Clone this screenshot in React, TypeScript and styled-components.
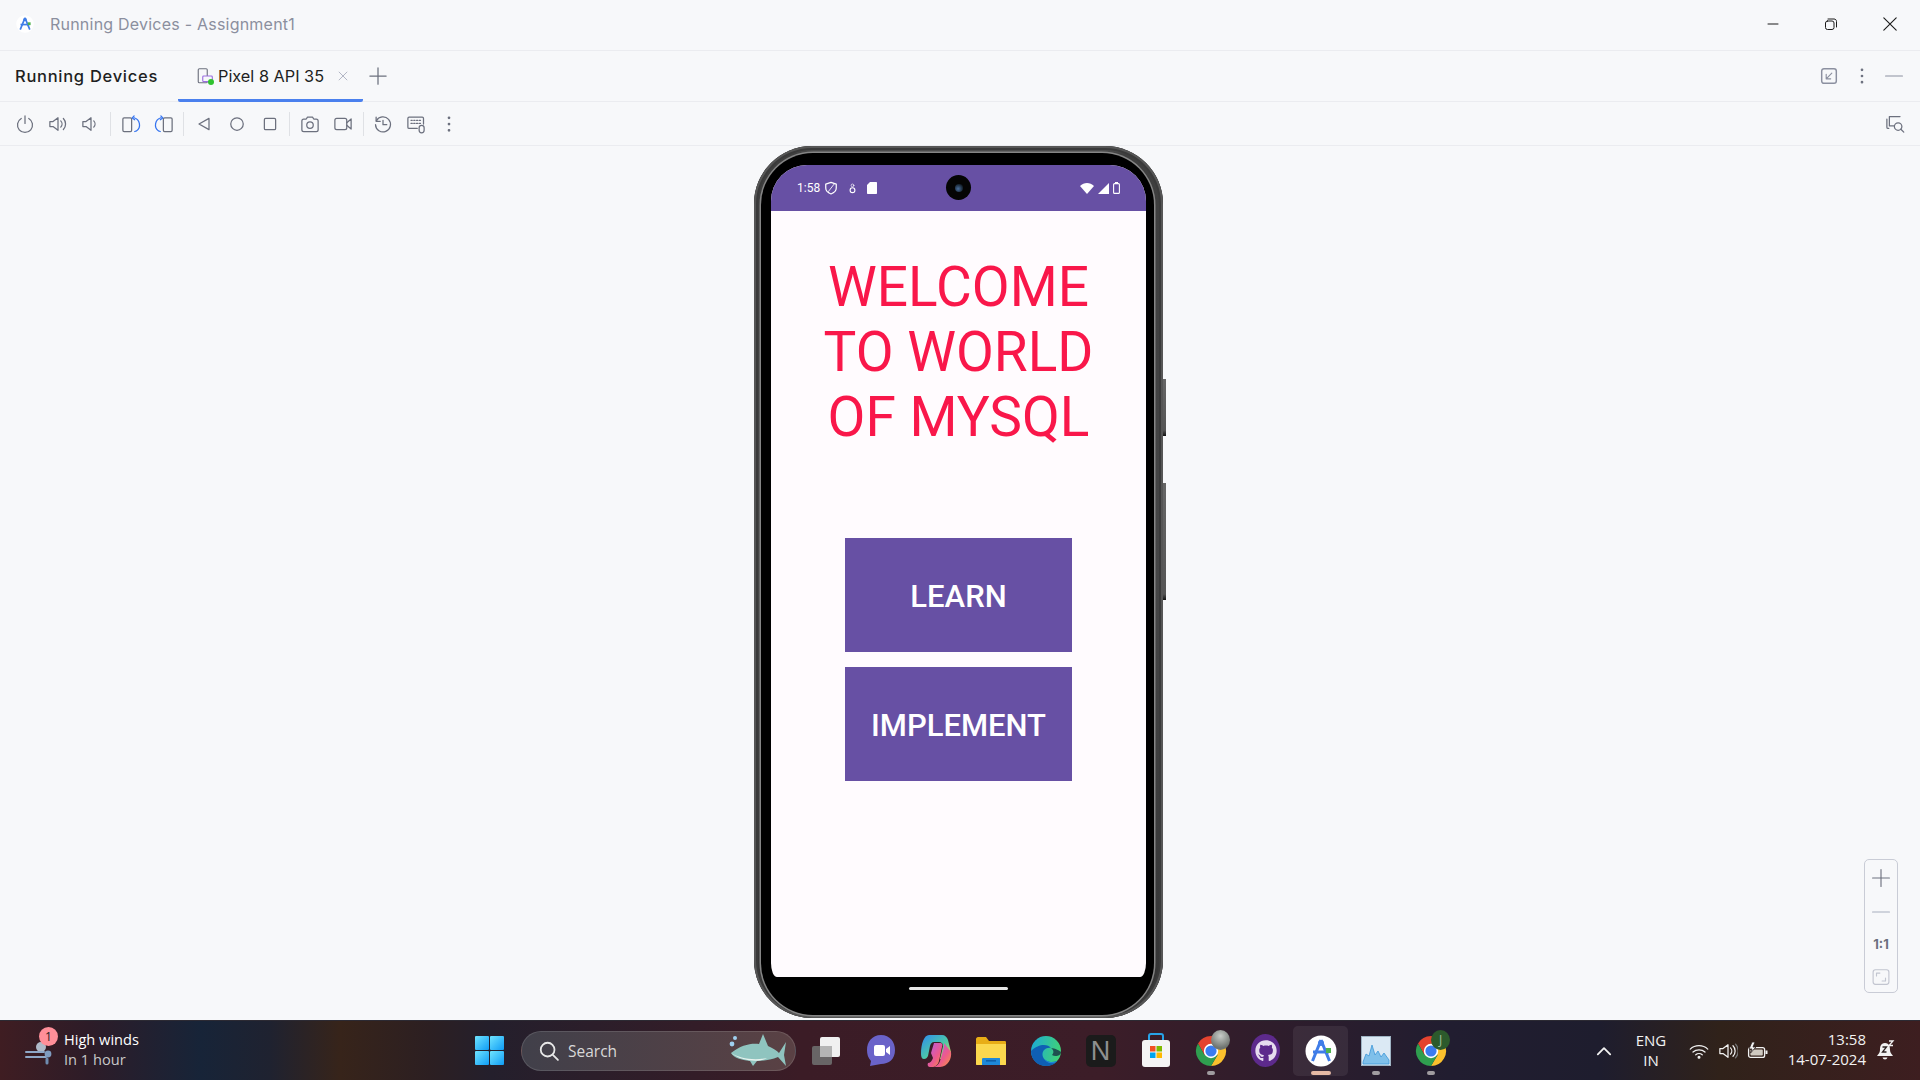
import styled, { createGlobalStyle } from "styled-components";
import { FaGithub } from "react-icons/fa";

const GlobalStyle = createGlobalStyle`
  html, body {
    margin: 0;
    padding: 0;
    width: 1920px;
    height: 1080px;
    overflow: hidden;
    background: #f7f8fa;
    font-family: "Inter", "Liberation Sans", sans-serif;
  }
  * { box-sizing: border-box; }
`;

// icons
const Ico = ({ children, size = 20, vb = 16, color = "#6c707e" }: { children: React.ReactNode; size?: number; vb?: number; color?: string }) => (
  <svg width={size} height={size} viewBox={`0 0 ${vb} ${vb}`} fill="none" stroke={color} strokeWidth="1" strokeLinecap="round" strokeLinejoin="round">
    {children}
  </svg>
);

const StudioLogo = ({ size }: { size: number }) => (
  <svg width={size} height={size} viewBox="0 0 32 32">
    <circle cx="16" cy="16" r="15.5" fill="#fff" />
    <path d="M16 5 L7.5 26 M16 5 L24.5 26" stroke="#3f7de8" strokeWidth="3" fill="none" />
    <path d="M8 17 H24" stroke="#3f7de8" strokeWidth="3" />
    <circle cx="16" cy="8" r="3" fill="#3f7de8" />
    <rect x="21" y="13" width="5" height="5" fill="#4fb34f" />
  </svg>
);

const ChromeIcon = () => (
  <svg width="32" height="32" viewBox="0 0 32 32">
    <path d="M3 8.5 A15 15 0 0 1 29 8.5 L16 8.5 L9.5 20 Z" fill="#e5432f" />
    <path d="M29 8.5 A15 15 0 0 1 16 31 L22.5 20 L16 8.5 Z" fill="#fbc02d" />
    <path d="M16 31 A15 15 0 0 1 3 8.5 L9.5 20 L22.5 20 Z" fill="#2f9e4f" />
    <circle cx="16" cy="16" r="7.2" fill="#fff" />
    <circle cx="16" cy="16" r="5.6" fill="#3b7cf0" />
  </svg>
);

const TaskView = () => (
  <svg width="32" height="32" viewBox="0 0 32 32">
    <rect x="10" y="2" width="20" height="20" rx="2" fill="#f0f0f0" />
    <rect x="2" y="11" width="20" height="19" rx="2" fill="#6e6e6e" fillOpacity="0.9" />
    <rect x="10" y="11" width="12" height="11" fill="#b4b4b4" />
  </svg>
);

const MeetIcon = () => (
  <svg width="32" height="34" viewBox="0 0 32 34">
    <path d="M16 1 C25 1 30 8 30 16 C30 25 24 30 16 30 L5 32 L6 27 C3 24 2 20 2 16 C2 8 7 1 16 1 Z" fill="#6a63c9" />
    <rect x="9" y="11" width="11" height="11" rx="2" fill="#fff" />
    <path d="M21 15 L25 12 V21 L21 18 Z" fill="#fff" />
  </svg>
);

const CopilotIcon = () => (
  <svg width="32" height="34" viewBox="0 0 32 34">
    <defs>
      <linearGradient id="cpA" x1="0" y1="0" x2="1" y2="1">
        <stop offset="0" stopColor="#2e8cf0" />
        <stop offset="0.55" stopColor="#4cc8a8" />
        <stop offset="1" stopColor="#f5d03c" />
      </linearGradient>
      <linearGradient id="cpB" x1="0" y1="0" x2="1" y2="1">
        <stop offset="0" stopColor="#b25ae8" />
        <stop offset="0.6" stopColor="#ee5a8c" />
        <stop offset="1" stopColor="#f79a3c" />
      </linearGradient>
    </defs>
    <path d="M9 1 H22 C25 1 27 3 28 6 L31 18 C31 24 27 25 24 25 H20 L23 12 C23 9 21 8 19 8 H14 C12 8 11 9 10 12 L8 22 C7 24 6 25 4 25 C2 25 1 23 1 20 C1 10 4 1 9 1 Z" fill="url(#cpA)" />
    <path d="M14 9 H20 C22 9 23 10 22 13 L19 27 C18 31 15 33 12 33 H10 C8 33 7 31 8 29 C10 29 12 27 13 24 L11 19 Z" fill="url(#cpB)" />
    <path d="M24 9 L31 18 C32 24 28 33 20 33 H14 C17 32 19 30 20 27 L24 13 Z" fill="url(#cpB)" />
  </svg>
);

const FolderIcon = () => (
  <svg width="32" height="30" viewBox="0 0 32 30">
    <path d="M1 3 C1 2 2 1 3 1 H11 L14 5 H30 C31 5 31 6 31 7 V28 C31 29 30 29 30 29 H2 C1 29 1 28 1 28 Z" fill="#e8ad16" />
    <path d="M1 8 H31 V28 C31 29 30 29 30 29 H2 C1 29 1 28 1 28 Z" fill="#fbd84e" />
    <path d="M7 29 V23 C7 22 8 22 8 22 H24 C25 22 25 22 25 23 V29 Z" fill="#1e88d8" />
    <rect x="11" y="24" width="10" height="1.6" fill="#0f5fa8" />
  </svg>
);

const EdgeIcon = () => (
  <svg width="32" height="32" viewBox="0 0 32 32">
    <defs>
      <linearGradient id="egA" x1="0" y1="0" x2="1" y2="0.2">
        <stop offset="0" stopColor="#1baad8" />
        <stop offset="1" stopColor="#3fd07a" />
      </linearGradient>
    </defs>
    <circle cx="16" cy="16" r="15" fill="url(#egA)" />
    <path d="M1 16 C1 25 8 31 16 31 C21 31 25 29 27 26 C22 28 15 27 13 22 C11 17 15 12 21 13 C18 9 9 8 1 16 Z" fill="#0f5fb4" />
    <path d="M13 22 C15 27 22 28 27 26 C24 30 16 29 13 22 Z" fill="#1d88d8" />
    <path d="M21 13 C25 13 30 16 31 17 C31 21 25 22 22 20 C24 18 24 15 21 13 Z" fill="#16283f" fillOpacity="0.75" />
  </svg>
);

const StoreIcon = () => (
  <svg width="32" height="36" viewBox="0 0 32 36">
    <path d="M9 8 V3 C9 2 10 1 11 1 H21 C22 1 23 2 23 3 V8" fill="none" stroke="#27a3e8" strokeWidth="2" />
    <rect x="2" y="7" width="28" height="27" rx="3" fill="#f4f4f4" />
    <rect x="10" y="13" width="5.5" height="5.5" fill="#f25022" />
    <rect x="16.5" y="13" width="5.5" height="5.5" fill="#7fba00" />
    <rect x="10" y="19.5" width="5.5" height="5.5" fill="#00a4ef" />
    <rect x="16.5" y="19.5" width="5.5" height="5.5" fill="#ffb900" />
  </svg>
);

const MonitorIcon = () => (
  <svg width="30" height="30" viewBox="0 0 30 30">
    <rect x="0.5" y="0.5" width="29" height="29" fill="#dbe9f4" stroke="#9fb4c4" />
    <path d="M2 26 L5 18 L8 20 L11 9 L14 19 L17 15 L20 21 L23 17 L28 24 V28 H2 Z" fill="#7fc0ea" stroke="#3d97d8" strokeWidth="0.8" />
  </svg>
);

const WindowsLogo = () => (
  <svg width="29" height="29" viewBox="0 0 29 29">
    <defs>
      <linearGradient id="winA" x1="0" y1="0" x2="1" y2="1">
        <stop offset="0" stopColor="#6fe4ff" />
        <stop offset="1" stopColor="#0f9cf5" />
      </linearGradient>
    </defs>
    <rect x="0" y="0" width="14" height="14" rx="1" fill="url(#winA)" />
    <rect x="15" y="0" width="14" height="14" rx="1" fill="url(#winA)" />
    <rect x="0" y="15" width="14" height="14" rx="1" fill="url(#winA)" />
    <rect x="15" y="15" width="14" height="14" rx="1" fill="url(#winA)" />
  </svg>
);

const Shark = () => (
  <svg width="58" height="36" viewBox="0 0 58 36">
    <path d="M2 20 C12 12 22 10 30 11 L34 1 L39 13 C44 15 48 18 50 20 L57 9 L55 22 L57 33 L49 24 C42 27 34 28 28 28 L24 33 L21 28 C12 27 5 25 2 20 Z" fill="#8fc4bf" />
    <path d="M2 20 C10 25 24 28 38 25 C30 30 12 28 2 20 Z" fill="#e8f2ee" />
    <circle cx="6" cy="5" r="2" fill="#9fd0f0" />
    <circle cx="3" cy="11" r="2.4" fill="#9fd0f0" />
  </svg>
);

const WeatherIcon = () => (
  <svg width="30" height="30" viewBox="0 0 30 30">
    <circle cx="17" cy="11" r="5" fill="#aeb9c8" />
    <path d="M2 16 H20 M2 21 H22" stroke="#8fa8c8" strokeWidth="2" fill="none" strokeLinecap="round" />
    <circle cx="24" cy="18" r="3.4" fill="#7f9cc0" />
    <path d="M23 23 V27" stroke="#6f8cb0" strokeWidth="3" strokeLinecap="round" />
  </svg>
);

// toolbar data
const leftToolbar: React.ReactNode[][] = [
  [
    <Ico key="power"><path d="M5 3.6 a6 6 0 1 0 6 0" /><path d="M8 1.5 V7.5" /></Ico>,
    <Ico key="volup"><path d="M1.5 6 H4 L8 3 V13 L4 10 H1.5 Z" /><path d="M10.2 5.5 a3.6 3.6 0 0 1 0 5" /><path d="M12.3 3.6 a6.4 6.4 0 0 1 0 8.8" /></Ico>,
    <Ico key="voldown"><path d="M1.5 6 H4 L8 3 V13 L4 10 H1.5 Z" /><path d="M10.2 5.5 a3.6 3.6 0 0 1 0 5" /></Ico>,
  ],
  [
    <Ico key="rotr"><rect x="1.5" y="3" width="7" height="11" rx="1" /><path d="M10.5 3 a6 6 0 0 1 2 10.5 L11 14" stroke="#3574f0" /><path d="M10.5 1.5 L9 3.2 L11 4.6" stroke="#3574f0" /></Ico>,
    <Ico key="rotl"><rect x="7.5" y="3" width="7" height="11" rx="1" /><path d="M5.5 3 a6 6 0 0 0 -2 10.5 L5 14" stroke="#3574f0" /><path d="M5.5 1.5 L7 3.2 L5 4.6" stroke="#3574f0" /></Ico>,
  ],
  [
    <Ico key="back"><path d="M12 3.5 L4 8 L12 12.5 Z" /></Ico>,
    <Ico key="home"><circle cx="8" cy="8" r="5" /></Ico>,
    <Ico key="overview"><rect x="3.5" y="3.5" width="9" height="9" rx="1" /></Ico>,
  ],
  [
    <Ico key="camera"><path d="M1.5 5.5 C1.5 4.5 2 4 3 4 H5 L6 2.5 H10 L11 4 H13 C14 4 14.5 4.5 14.5 5.5 V12.5 C14.5 13.5 14 14 13 14 H3 C2 14 1.5 13.5 1.5 12.5 Z" /><circle cx="8" cy="8.8" r="2.6" /></Ico>,
    <Ico key="video"><rect x="1.5" y="3.5" width="9.5" height="9" rx="1.5" /><path d="M11 7 L14.5 4 V12 L11 9" /></Ico>,
  ],
  [
    <Ico key="history"><path d="M2.7 5.5 A6 6 0 1 1 2 8.5" /><path d="M2.5 2.5 V5.8 H5.8" /><path d="M8 5 V8.5 H11" /></Ico>,
    <Ico key="keys"><path d="M9 11.5 H2.5 C2 11.5 1.5 11 1.5 10.5 V3.5 C1.5 3 2 2.5 2.5 2.5 H13 C13.5 2.5 14 3 14 3.5 V8" /><path d="M4 5 H12 M4 7.5 H12" strokeDasharray="1 1.2" /><rect x="10.5" y="9" width="4" height="6" rx="2" /></Ico>,
    <Ico key="more"><circle cx="8" cy="3" r="0.6" fill="#6c707e" /><circle cx="8" cy="8" r="0.6" fill="#6c707e" /><circle cx="8" cy="13" r="0.6" fill="#6c707e" /></Ico>,
  ],
];

const apps = [
  { id: "taskview", icon: <TaskView /> },
  { id: "meet", icon: <MeetIcon /> },
  { id: "copilot", icon: <CopilotIcon /> },
  { id: "folder", icon: <FolderIcon /> },
  { id: "edge", icon: <EdgeIcon /> },
  { id: "notion", icon: <NotionTile>N</NotionTile> },
  { id: "store", icon: <StoreIcon /> },
  { id: "chrome", icon: <ChromeIcon />, running: true, badge: <PhotoBadge /> },
  { id: "github", icon: <GithubDisc><FaGithub size={22} color="#e6dcef" /></GithubDisc> },
  { id: "studio", icon: <StudioLogo size={32} />, active: true },
  { id: "monitor", icon: <MonitorIcon />, running: true },
  { id: "chrome2", icon: <ChromeIcon />, running: true, badge: <LetterBadge>J</LetterBadge> },
];

export default function App() {
  return (
    <>
      <GlobalStyle />
      <Page>
        <TitleBar>
          <TitleLeft>
            <StudioLogo size={18} />
            <TitleText>Running Devices - Assignment1</TitleText>
          </TitleLeft>
          <WindowControls>
            <Ico color="#1b1b1b" size={16}><path d="M3 8 H13" /></Ico>
            <Ico color="#1b1b1b" size={16}><rect x="2.5" y="5" width="8.5" height="8.5" rx="2" /><path d="M5 3 H11 C12.5 3 13.5 4 13.5 5.5 V11" /></Ico>
            <Ico color="#1b1b1b" size={18}><path d="M2.5 2.5 L13.5 13.5 M13.5 2.5 L2.5 13.5" /></Ico>
          </WindowControls>
        </TitleBar>

        <TabRow>
          <PanelName>Running Devices</PanelName>
          <Tab>
            <TabIcon>
              <Ico color="#6c707e" size={18}><rect x="2" y="1.5" width="8" height="12.5" rx="1" /><rect x="6" y="8" width="8.5" height="5" rx="0.8" stroke="#9b6fe0" fill="#f7f8fa" /></Ico>
              <OnlineDot />
            </TabIcon>
            <TabLabel>Pixel 8 API 35</TabLabel>
            <Ico color="#a8adbd" size={14}><path d="M3.5 3.5 L12.5 12.5 M12.5 3.5 L3.5 12.5" /></Ico>
          </Tab>
          <Ico color="#6c707e" size={20}><path d="M8 1.5 V14.5 M1.5 8 H14.5" /></Ico>
          <TabRowRight>
            <Ico color="#8c90a0" size={18}><rect x="1.5" y="1.5" width="13" height="13" rx="2" strokeWidth="1.3" /><path d="M10.5 5.5 L5.5 10.5 M5.5 6.5 V10.5 H9.5" /></Ico>
            <Ico color="#6c707e" size={18}><circle cx="8" cy="2.5" r="0.7" fill="#6c707e" /><circle cx="8" cy="8" r="0.7" fill="#6c707e" /><circle cx="8" cy="13.5" r="0.7" fill="#6c707e" /></Ico>
            <Ico color="#8c90a0" size={18}><path d="M0.5 8 H15.5" /></Ico>
          </TabRowRight>
        </TabRow>

        <Toolbar>
          {leftToolbar.map((group, i) => (
            <ToolGroup key={i}>
              {i > 0 && <ToolSep />}
              {group.map((icon, j) => (
                <ToolButton key={j}>{icon}</ToolButton>
              ))}
            </ToolGroup>
          ))}
          <ToolbarEnd>
            <Ico size={20}><path d="M3 11.5 H2.5 C2 11.5 1.5 11 1.5 10.5 V4" /><path d="M3.5 2 H12 M3.5 2 V9.5 H7" /><circle cx="10.5" cy="10" r="3" /><path d="M12.7 12.2 L15 14.5" /></Ico>
          </ToolbarEnd>
        </Toolbar>

        <Stage>
          <Phone>
            <PowerKey />
            <VolumeKey />
            <Band>
              <Bezel>
                <Screen>
                  <StatusBar>
                    <StatusLeft>
                      <Clock>1:58</Clock>
                      <Ico color="#fff" size={14}><path d="M8 1.5 L14 3.5 V8 C14 11 11.5 13.5 8 14.8 C4.5 13.5 2 11 2 8 V3.5 Z" strokeWidth="1.4" /><path d="M5 12 L12 3" /></Ico>
                      <StatusGap><Ico color="#fff" size={11}><circle cx="8" cy="3.5" r="2" /><circle cx="8" cy="10.5" r="3.5" strokeWidth="1.6" /></Ico></StatusGap>
                      <StatusGap>
                        <svg width="10" height="12" viewBox="0 0 10 12"><path d="M3 0 H9 C9.6 0 10 .4 10 1 V11 C10 11.6 9.6 12 9 12 H1 C.4 12 0 11.6 0 11 V3 Z" fill="#fff" /></svg>
                      </StatusGap>
                    </StatusLeft>
                    <CameraHole><CameraLens /></CameraHole>
                    <StatusRight>
                      <svg width="14" height="11" viewBox="0 0 14 11"><path d="M0 3 C4 -1 10 -1 14 3 L7 11 Z" fill="#fff" /></svg>
                      <svg width="11" height="11" viewBox="0 0 11 11"><path d="M11 0 V11 H0 Z" fill="#fff" /></svg>
                      <svg width="7" height="12" viewBox="0 0 7 12"><rect x=".6" y="1.6" width="5.8" height="9.8" rx="1" fill="none" stroke="#fff" strokeWidth="1.1" /><rect x="2" y="0" width="3" height="1.6" fill="#fff" /></svg>
                    </StatusRight>
                  </StatusBar>
                  <AppBody>
                    <Heading>WELCOME<br />TO WORLD<br />OF MYSQL</Heading>
                    <ActionButton>LEARN</ActionButton>
                    <ActionButton>IMPLEMENT</ActionButton>
                  </AppBody>
                </Screen>
                <GestureArea><HomePill /></GestureArea>
              </Bezel>
            </Band>
          </Phone>

          <ZoomPanel>
            <Ico color="#6c707e" size={18}><path d="M8 0.5 V15.5 M0.5 8 H15.5" /></Ico>
            <Ico color="#a8adbd" size={18}><path d="M0.5 8 H15.5" /></Ico>
            <ZoomLabel>1:1</ZoomLabel>
            <Ico color="#c2c5d0" size={18}><rect x="1" y="1.5" width="14" height="13" rx="2" /><path d="M4 7 V4.5 H7 M12 9 V11.5 H9" /></Ico>
          </ZoomPanel>
        </Stage>

        <Taskbar>
          <Weather>
            <WeatherMark>
              <WeatherIcon />
              <AlertBadge>1</AlertBadge>
            </WeatherMark>
            <WeatherText>
              <WeatherTitle>High winds</WeatherTitle>
              <WeatherSub>In 1 hour</WeatherSub>
            </WeatherText>
          </Weather>
          <WindowsLogo />
          <SearchPill>
            <Ico color="#e8e8e8" size={22}><circle cx="7" cy="7" r="5" strokeWidth="1.3" /><path d="M10.8 10.8 L14.5 14.5" strokeWidth="1.3" /></Ico>
            <SearchText>Search</SearchText>
            <SharkSlot><Shark /></SharkSlot>
          </SearchPill>
          <AppRow>
            {apps.map((a) => (
              <AppSlot key={a.id} $active={a.active}>
                {a.icon}
                {a.badge}
                {a.running && <RunDot />}
                {a.active && <ActiveBar />}
              </AppSlot>
            ))}
          </AppRow>
          <Tray>
            <Ico color="#f2f2f2" size={18}><path d="M2.5 11 L8 5.5 L13.5 11" strokeWidth="1.6" /></Ico>
            <Lang>ENG<br />IN</Lang>
            <TrayIcons>
              <Ico color="#f2f2f2" size={20}><path d="M1 6.5 C4.8 2.8 11.2 2.8 15 6.5 M3.2 8.8 C5.8 6.4 10.2 6.4 12.8 8.8 M5.4 11 C6.8 9.8 9.2 9.8 10.6 11" /><circle cx="8" cy="13" r="0.7" fill="#f2f2f2" /></Ico>
              <Ico color="#f2f2f2" size={20}><path d="M1.5 6 H4 L8 3 V13 L4 10 H1.5 Z" /><path d="M10 5.5 a3.6 3.6 0 0 1 0 5 M12 3.8 a6 6 0 0 1 0 8.4" /><path d="M14 2.5 a8 8 0 0 1 0 11" stroke="#777" /></Ico>
              <svg width="22" height="18" viewBox="0 0 22 18">
                <rect x="1.6" y="5.6" width="16" height="9.8" rx="2" fill="none" stroke="#f2f2f2" strokeWidth="1.3" />
                <rect x="3.4" y="7.4" width="12.4" height="6.2" rx="1" fill="#cfc9c0" />
                <rect x="18.5" y="8.5" width="2" height="3.5" fill="#f2f2f2" />
                <path d="M5 0 L2 7 H5 L3.5 11 L9 5 H6 L8 0 Z" fill="#f2f2f2" stroke="#2a2020" strokeWidth=".8" />
              </svg>
            </TrayIcons>
            <DateTime>13:58<br />14-07-2024</DateTime>
            <svg width="20" height="22" viewBox="0 0 20 22">
              <path d="M10 3 C5.5 3 5 7 5 10 C5 13 3 14 2 16 H18 C17 14 15 13 15 10 C15 7 14.5 3 10 3 Z" fill="#f2f2f2" />
              <path d="M7.5 17.5 a2.6 2.6 0 0 0 5 0 Z" fill="#f2f2f2" />
              <path d="M7.5 7 H11.5 L7.5 12 H11.5" stroke="#2a2020" strokeWidth="1.3" fill="none" />
              <path d="M14 1 H18 L14 5.5 H18" stroke="#f2f2f2" strokeWidth="1.3" fill="none" />
            </svg>
          </Tray>
        </Taskbar>
      </Page>
    </>
  );
}

// small wrappers used by the app list
function NotionTile({ children }: { children: React.ReactNode }) {
  return <NotionBox>{children}</NotionBox>;
}
function GithubDisc({ children }: { children: React.ReactNode }) {
  return <GithubBox>{children}</GithubBox>;
}
function PhotoBadge() {
  return <PhotoBox />;
}
function LetterBadge({ children }: { children: React.ReactNode }) {
  return <LetterBox>{children}</LetterBox>;
}

// styling
const Page = styled.div`
  width: 1920px;
  height: 1080px;
  display: flex;
  flex-direction: column;
  background: #f7f8fa;
`;

const TitleBar = styled.div`
  height: 51px;
  flex: none;
  display: flex;
  align-items: center;
  justify-content: space-between;
  padding: 0 21px 2px 16px;
  border-bottom: 1px solid #ebecf0;
`;

const TitleLeft = styled.div`
  display: flex;
  align-items: center;
  gap: 16px;
`;

const TitleText = styled.span`
  font-size: 16px;
  color: #8b8f9e;
  letter-spacing: 0.22px;
`;

const WindowControls = styled.div`
  display: flex;
  align-items: center;
  gap: 42px;
`;

const TabRow = styled.div`
  height: 51px;
  flex: none;
  display: flex;
  align-items: center;
  padding: 0 17px 0 15px;
  border-bottom: 1px solid #ebecf0;
`;

const PanelName = styled.span`
  width: 163px;
  font-size: 16.5px;
  font-weight: 500;
  letter-spacing: 0.72px;
  color: #1e1f22;
`;

const Tab = styled.div`
  width: 185px;
  height: 51px;
  display: flex;
  align-items: center;
  padding: 2px 0 0 18px;
  margin-right: 5px;
  border-bottom: 3px solid #4a80ee;
  border-radius: 0 0 2px 2px;
`;

const TabIcon = styled.span`
  position: relative;
  display: flex;
  margin-right: 4px;
`;

const OnlineDot = styled.span`
  position: absolute;
  right: 0;
  bottom: 0;
  width: 6px;
  height: 6px;
  border-radius: 50%;
  background: #2fc22f;
`;

const TabLabel = styled.span`
  font-size: 16.3px;
  color: #1e1f22;
  margin-right: 12px;
  white-space: nowrap;
`;

const TabRowRight = styled.div`
  margin-left: auto;
  display: flex;
  align-items: center;
  gap: 14.5px;
`;

const Toolbar = styled.div`
  height: 44px;
  flex: none;
  display: flex;
  align-items: center;
  padding: 0 15px 0 8px;
  border-bottom: 1px solid #ebecf0;
`;

const ToolGroup = styled.div`
  display: flex;
  align-items: center;
`;

const ToolSep = styled.span`
  width: 1px;
  height: 24px;
  margin: 0 3.1px;
  background: #dfe1e5;
`;

const ToolButton = styled.span`
  width: 33px;
  display: flex;
  justify-content: center;
`;

const ToolbarEnd = styled.div`
  margin-left: auto;
  display: flex;
`;

const Stage = styled.div`
  position: relative;
  height: 874px;
  flex: none;
  display: flex;
  justify-content: center;
  overflow: hidden;
`;

const Phone = styled.div`
  position: relative;
  width: 409px;
  height: 872px;
  margin-left: -3px;
`;

const PowerKey = styled.span`
  position: absolute;
  right: -3px;
  top: 233px;
  width: 3px;
  height: 57px;
  background: linear-gradient(#666, #555 90%, #111);
`;

const VolumeKey = styled.span`
  position: absolute;
  right: -3px;
  top: 337px;
  width: 3px;
  height: 117px;
  background: linear-gradient(#666, #555 95%, #111);
`;

const Band = styled.div`
  height: 100%;
  padding: 7px 9px 3px 7px;
  border-radius: 58px;
  background: linear-gradient(180deg, #5e5e5e 0, #3e3e3e 8px, #464646 50%, #333 100%);
  box-shadow: inset 0 0 0 2px #565656, inset 0 0 0 4px #3a3a3a;
`;

const Bezel = styled.div`
  height: 100%;
  display: flex;
  flex-direction: column;
  padding: 12px 8px 0 10px;
  border-radius: 52px;
  background: #000;
  box-shadow: 0 0 0 1.5px #858585;
`;

const Screen = styled.div`
  flex: none;
  width: 375px;
  height: 812px;
  display: flex;
  flex-direction: column;
  overflow: hidden;
  background: #fffbfe;
  border-radius: 36px 36px 6px 6px / 36px 36px 14px 14px;
`;

const StatusBar = styled.div`
  position: relative;
  height: 46px;
  flex: none;
  display: flex;
  align-items: center;
  justify-content: space-between;
  padding: 0 26px 0 26px;
  background: #6750a4;
`;

const StatusLeft = styled.div`
  display: flex;
  align-items: center;
  gap: 4px;
`;

const Clock = styled.span`
  font-family: Roboto, sans-serif;
  font-size: 12px;
  color: #fff;
`;

const StatusGap = styled.span`
  display: flex;
  margin-left: 5px;
`;

const CameraHole = styled.span`
  position: absolute;
  left: 175px;
  top: 10px;
  width: 25px;
  height: 25px;
  border-radius: 50%;
  background: #050505;
  display: flex;
  align-items: center;
  justify-content: center;
`;

const CameraLens = styled.span`
  width: 8px;
  height: 8px;
  border-radius: 50%;
  background: radial-gradient(circle at 40% 60%, #4a6f9c, #14202c 70%);
`;

const StatusRight = styled.div`
  display: flex;
  align-items: center;
  gap: 4px;
`;

const AppBody = styled.div`
  flex: 1;
  display: flex;
  flex-direction: column;
  align-items: center;
  padding-top: 44px;
  gap: 15px;
`;

const Heading = styled.h1`
  margin: 0 0 73px;
  height: 195px;
  font-family: Roboto, sans-serif;
  font-size: 55px;
  font-weight: 400;
  line-height: 65px;
  text-align: center;
  color: #f9174a;
`;

const ActionButton = styled.button`
  width: 227px;
  height: 114px;
  border: 0;
  padding: 2px 0 0;
  background: #6750a4;
  color: #fff;
  font-family: Roboto, sans-serif;
  font-size: 31px;
  font-weight: 500;
`;

const GestureArea = styled.div`
  height: 13px;
  display: flex;
  align-items: flex-end;
  justify-content: center;
  width: 375px;
`;

const HomePill = styled.span`
  width: 99px;
  height: 3px;
  border-radius: 2px;
  background: #e6e6e6;
`;

const ZoomPanel = styled.div`
  position: absolute;
  right: 22px;
  top: 713px;
  width: 34px;
  height: 134px;
  padding: 9px 0 6px;
  display: flex;
  flex-direction: column;
  align-items: center;
  justify-content: space-between;
  border: 1px solid #c9ccd6;
  border-radius: 5px;
  background: #f7f8fa;
`;

const ZoomLabel = styled.span`
  font-size: 13px;
  font-weight: 700;
  color: #6c707e;
`;

const Taskbar = styled.div`
  height: 60px;
  flex: none;
  display: flex;
  align-items: center;
  border-top: 1px solid #2c2a33;
  background: linear-gradient(90deg, #3f1d22 0, #2d1c28 90px, #172438 200px, #1f2230 270px, #37241a 340px, #2c1f22 430px, #241f2c 490px, #3b1c26 800px, #3c1d28 1100px, #211d30 1450px, #1e1d2e 1600px, #30221a 1720px, #3d1e20 1920px);
`;

const Weather = styled.div`
  width: 475px;
  flex: none;
  display: flex;
  align-items: center;
  padding-left: 24px;
`;

const WeatherMark = styled.div`
  position: relative;
  display: flex;
  margin-right: 10px;
`;

const AlertBadge = styled.span`
  position: absolute;
  left: 15px;
  top: -9px;
  width: 19px;
  height: 19px;
  border-radius: 50%;
  background: #ff8f99;
  color: #222;
  font-family: "Open Sans", sans-serif;
  font-size: 12px;
  text-align: center;
  line-height: 19px;
`;

const WeatherText = styled.div`
  padding-bottom: 4px;
  font-family: "Open Sans", sans-serif;
  font-size: 14.6px;
  line-height: 20px;
`;

const WeatherTitle = styled.div`
  color: #fff;
`;

const WeatherSub = styled.div`
  color: #c8c8c8;
`;

const SearchPill = styled.div`
  width: 275px;
  height: 40px;
  margin-left: 17px;
  padding: 0 8px 0 16px;
  display: flex;
  align-items: center;
  border: 1px solid rgba(255, 255, 255, 0.12);
  border-radius: 20px;
  background: linear-gradient(90deg, #41404a, #5a4144);
`;

const SearchText = styled.span`
  margin-left: 8px;
  font-family: "Open Sans", sans-serif;
  font-size: 15.5px;
  color: #d8d8d8;
`;

const SharkSlot = styled.span`
  margin-left: auto;
  display: flex;
`;

const AppRow = styled.div`
  margin-left: 2px;
  display: flex;
`;

const AppSlot = styled.div<{ $active?: boolean }>`
  position: relative;
  width: 55px;
  height: 50px;
  display: flex;
  align-items: center;
  justify-content: center;
  border-radius: 5px;
  background: ${(p) => (p.$active ? "rgba(255,255,255,0.07)" : "transparent")};
`;

const RunDot = styled.span`
  position: absolute;
  left: 50%;
  bottom: 1px;
  width: 8px;
  height: 4px;
  margin-left: -4px;
  border-radius: 2px;
  background: #a09ca0;
`;

const ActiveBar = styled.span`
  position: absolute;
  left: 50%;
  bottom: 1px;
  width: 20px;
  height: 4px;
  margin-left: -10px;
  border-radius: 2px;
  background: #e5b8a4;
`;

const PhotoBox = styled.span`
  position: absolute;
  left: 28px;
  top: 4px;
  width: 19px;
  height: 20px;
  border-radius: 50%;
  background: radial-gradient(circle at 50% 30%, #c8ccc8, #6f7470 70%);
`;

const LetterBox = styled.span`
  position: absolute;
  left: 28px;
  top: 4px;
  width: 19px;
  height: 20px;
  border-radius: 50%;
  background: #2c5a2c;
  color: #9fc09f;
  font-family: "Open Sans", sans-serif;
  font-size: 12px;
  line-height: 20px;
  text-align: center;
`;

const NotionBox = styled.span`
  width: 30px;
  height: 32px;
  border-radius: 5px;
  background: #1b1b1b;
  color: #8f8f8f;
  font-family: "Liberation Sans", sans-serif;
  font-size: 27px;
  line-height: 32px;
  text-align: center;
`;

const GithubBox = styled.span`
  width: 29px;
  height: 33px;
  border-radius: 50%;
  background: #5d2a8c;
  display: flex;
  align-items: center;
  justify-content: center;
`;

const Tray = styled.div`
  margin-left: auto;
  padding-right: 25px;
  display: flex;
  align-items: center;
`;

const Lang = styled.div`
  width: 50px;
  margin-left: 13px;
  padding-bottom: 2px;
  font-family: "Open Sans", sans-serif;
  font-size: 15px;
  line-height: 20px;
  text-align: center;
  color: #f2f2f2;
`;

const TrayIcons = styled.div`
  margin-left: 13px;
  display: flex;
  align-items: center;
  gap: 9px;
`;

const DateTime = styled.div`
  width: 97px;
  margin-right: 9px;
  padding-bottom: 4px;
  font-family: "Open Sans", sans-serif;
  font-size: 15px;
  line-height: 20px;
  text-align: right;
  color: #f2f2f2;
`;
